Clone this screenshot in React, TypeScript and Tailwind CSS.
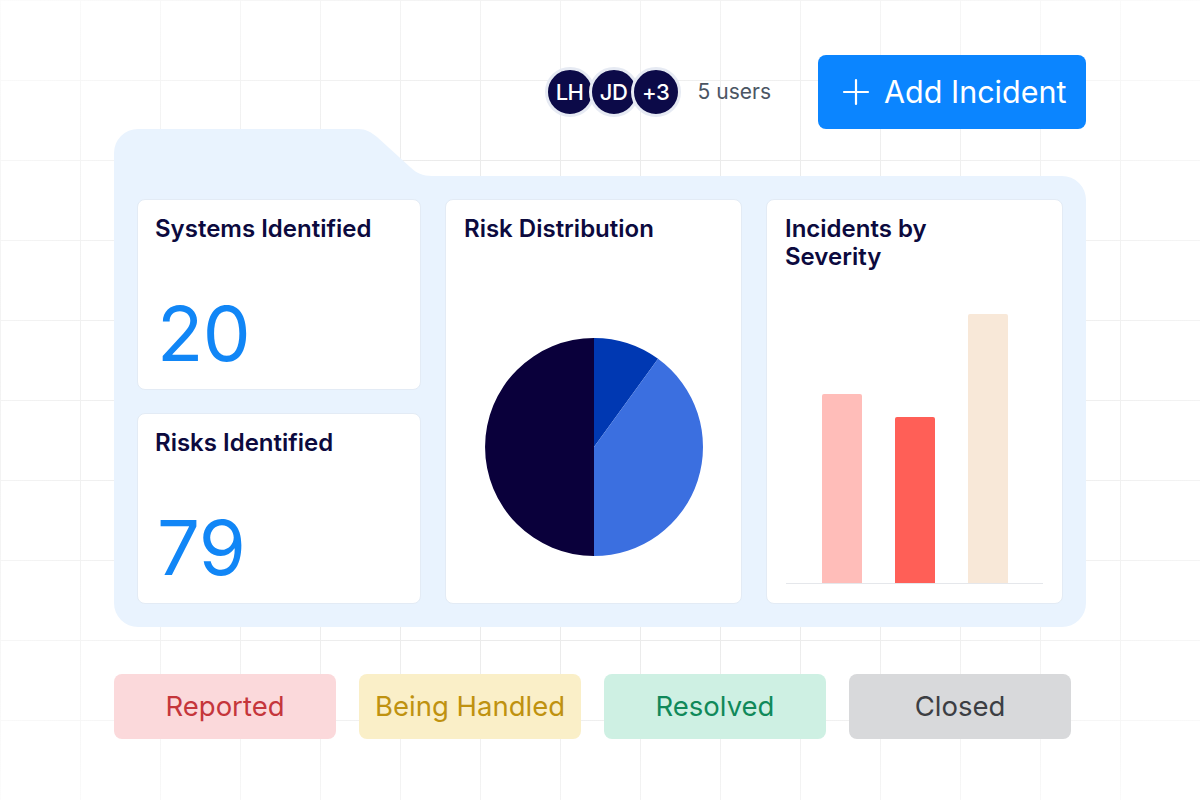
import React from 'react';

const font = { fontFamily: 'Inter, "Noto Sans", sans-serif' };

function Avatar({ label, className }: { label: string; className?: string }) {
  return (
    <div
      className={`flex h-[50px] w-[50px] items-center justify-center rounded-full border-[3px] border-[#e6eaf3] bg-[#0c0a48] text-[22px] font-medium tracking-[-0.5px] text-white ${className ?? ''}`}
    >
      {label}
    </div>
  );
}

function StatCard({ title, value }: { title: string; value: string }) {
  return (
    <div className="flex h-[191px] flex-col justify-between rounded-lg border border-[#e3ebf5] bg-white pb-[18px] pl-[17px] pt-[15px]">
      <h3 className="text-[24px] font-semibold leading-[28px] text-[#0c0a3e]">{title}</h3>
      <div className="pl-[2px] text-[76px] font-normal leading-[76px] tracking-[-0.5px] text-[#1186f6]">{value}</div>
    </div>
  );
}

function Pie() {
  return (
    <svg width="220" height="220" viewBox="0 0 220 220">
      <path d="M110 110 L110 219 A109 109 0 0 1 110 1 Z" fill="#0a003b" />
      <path d="M110 110 L110 1 A109 109 0 0 1 174.07 21.82 Z" fill="#0038b2" />
      <path d="M110 110 L174.07 21.82 A109 109 0 0 1 110 219 Z" fill="#3b6fe0" />
    </svg>
  );
}

const bars = [
  { h: 189, color: 'bg-[#ffbdb9]' },
  { h: 166, color: 'bg-[#ff5f57]' },
  { h: 269, color: 'bg-[#f8e8d8]' },
];

const statuses = [
  { label: 'Reported', cls: 'bg-[#fbd9db] text-[#c5363b]' },
  { label: 'Being Handled', cls: 'bg-[#faefc8] text-[#bf9210]' },
  { label: 'Resolved', cls: 'bg-[#cef0e3] text-[#10895a]' },
  { label: 'Closed', cls: 'bg-[#d8d9db] text-[#3c3e43]' },
];

export default function App() {
  return (
    <div
      className="h-[800px] w-full overflow-hidden bg-white bg-[radial-gradient(ellipse_at_center,transparent_45%,rgba(255,255,255,0.85)_100%),linear-gradient(to_right,#ebebeb_1px,transparent_1px),linear-gradient(to_bottom,#ebebeb_1px,transparent_1px)] bg-[size:100%_100%,80px_80px,80px_80px]"
      style={font}
    >
      <div className="ml-[114px] w-[972px] pt-[55px]">
        {/* Top bar */}
        <div className="flex items-center justify-end">
          <div className="flex items-center">
            <Avatar label="LH" />
            <Avatar label="JD" className="-ml-[6px]" />
            <Avatar label="+3" className="-ml-[8px]" />
            <span className="ml-[17px] text-[21px] text-[#4b5563]">5 users</span>
          </div>
          <button className="ml-[47px] flex h-[74px] w-[268px] items-center rounded-lg bg-[#0b85ff] pl-[24px] text-white">
            <svg width="28" height="28" viewBox="0 0 28 28" fill="none" stroke="currentColor" strokeWidth="2.2" strokeLinecap="round">
              <path d="M14 2 V26 M2 14 H26" />
            </svg>
            <span className="ml-[14px] text-[30.5px] font-normal leading-none">Add Incident</span>
          </button>
        </div>

        {/* Folder tab */}
        <div className="flex h-[47px]">
          <div className="w-[238px] rounded-tl-[24px] bg-[#e9f3fe]" />
          <svg width="90" height="47" viewBox="0 0 90 47" className="block">
            <path d="M0 0 H6 C14 0 19 3 25 8 L58 38 C64 44 71 47 80 47 H90 V47 H0 Z" fill="#e9f3fe" />
          </svg>
        </div>

        {/* Folder body */}
        <div className="grid grid-cols-[284px_297px_297px] gap-[24px] rounded-b-[24px] rounded-tr-[24px] bg-[#e9f3fe] p-[23px]">
          <div className="flex flex-col gap-[23px]">
            <StatCard title="Systems Identified" value="20" />
            <StatCard title="Risks Identified" value="79" />
          </div>

          <div className="flex flex-col items-center rounded-lg border border-[#e3ebf5] bg-white pt-[15px]">
            <h3 className="self-start pl-[18px] text-[24px] font-semibold leading-[28px] text-[#0c0a3e]">Risk Distribution</h3>
            <div className="mt-[94px]">
              <Pie />
            </div>
          </div>

          <div className="flex flex-col rounded-lg border border-[#e3ebf5] bg-white pt-[15px]">
            <h3 className="max-w-[190px] pl-[18px] text-[24px] font-semibold leading-[28px] text-[#0c0a3e]">
              Incidents by Severity
            </h3>
            <div className="mx-[19px] mb-[19px] mt-auto flex h-[300px] items-end justify-center gap-[33px] border-b border-[#e5e7eb]">
              {bars.map((b, i) => (
                <div key={i} className={`w-[40px] rounded-t-[2px] ${b.color}`} style={{ height: b.h }} />
              ))}
            </div>
          </div>
        </div>

        {/* Status pills */}
        <div className="mt-[47px] flex gap-[23px]">
          {statuses.map((s) => (
            <div
              key={s.label}
              className={`flex h-[65px] w-[222px] items-center justify-center rounded-lg text-[27.5px] ${s.cls}`}
            >
              {s.label}
            </div>
          ))}
        </div>
      </div>
    </div>
  );
}
